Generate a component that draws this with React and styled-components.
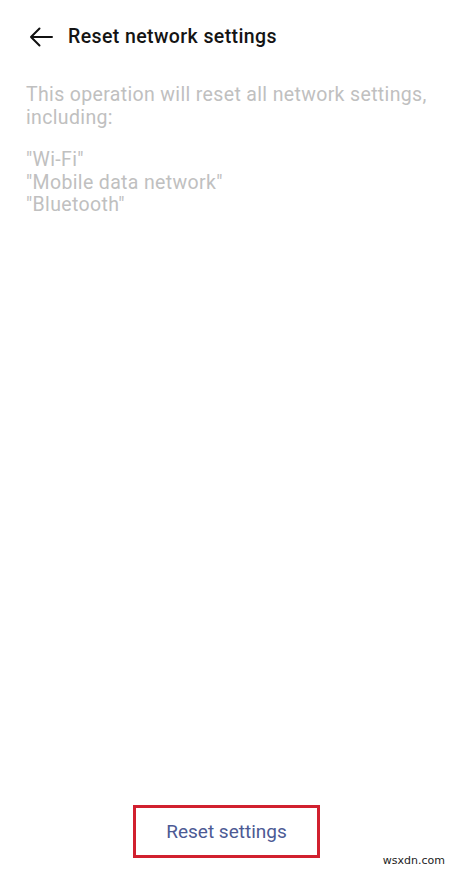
import React from "react";
import styled, { createGlobalStyle } from "styled-components";

const Global = createGlobalStyle`
  html, body {
    margin: 0;
    padding: 0;
    background: #fff;
  }
  body {
    font-family: Roboto, "Noto Sans", sans-serif;
  }
`;

export default function App() {
  return (
    <>
      <Global />
      <Screen>
        <Header>
          <BackButton aria-label="Back">
            <svg width="24" height="20" viewBox="0 0 24 20" fill="none">
              <path
                d="M23 10H2M10.5 1.5L2 10l8.5 8.5"
                stroke="#111"
                strokeWidth="2"
                strokeLinecap="round"
                strokeLinejoin="round"
              />
            </svg>
          </BackButton>
          <Title>Reset network settings</Title>
        </Header>

        <Body>
          <Para>This operation will reset all network settings, including:</Para>
          <List>
            <span>"Wi-Fi"</span>
            <span>"Mobile data network"</span>
            <span>"Bluetooth"</span>
          </List>
        </Body>

        <Footer>
          <ResetButton>Reset settings</ResetButton>
          <Watermark>wsxdn.com</Watermark>
        </Footer>
      </Screen>
    </>
  );
}

const Screen = styled.div`
  width: 456px;
  height: 871px;
  display: flex;
  flex-direction: column;
  background: #fff;
  position: relative;
  overflow: hidden;
`;

const Header = styled.div`
  height: 73px;
  display: flex;
  align-items: center;
  padding-left: 29px;
  box-sizing: border-box;
`;

const BackButton = styled.button`
  border: 0;
  background: none;
  padding: 0;
  width: 24px;
  height: 20px;
  display: flex;
  align-items: center;
  margin-right: 15px;
`;

const Title = styled.h1`
  margin: 0;
  font-size: 19.5px;
  font-weight: 500;
  color: #141414;
  letter-spacing: 0.4px;
`;

const Body = styled.div`
  flex: 1;
  padding: 11px 20px 0 26px;
  color: #c0c0c0;
  font-size: 19.5px;
  line-height: 22.5px;
  letter-spacing: 0.35px;
`;

const Para = styled.p`
  margin: 0 0 20px;
`;

const List = styled.div`
  display: flex;
  flex-direction: column;
`;

const Footer = styled.div`
  height: 66px;
  display: flex;
  justify-content: center;
  position: relative;
`;

const ResetButton = styled.button`
  margin-right: 3px;
  width: 187px;
  height: 53px;
  border: 3px solid #d1202f;
  background: #fff;
  color: #4c5a94;
  font-family: Roboto, sans-serif;
  font-size: 19px;
  box-sizing: border-box;
`;

const Watermark = styled.span`
  position: absolute;
  right: 11px;
  bottom: 4px;
  font-family: "DejaVu Sans", sans-serif;
  font-size: 11px;
  color: #222;
`;
